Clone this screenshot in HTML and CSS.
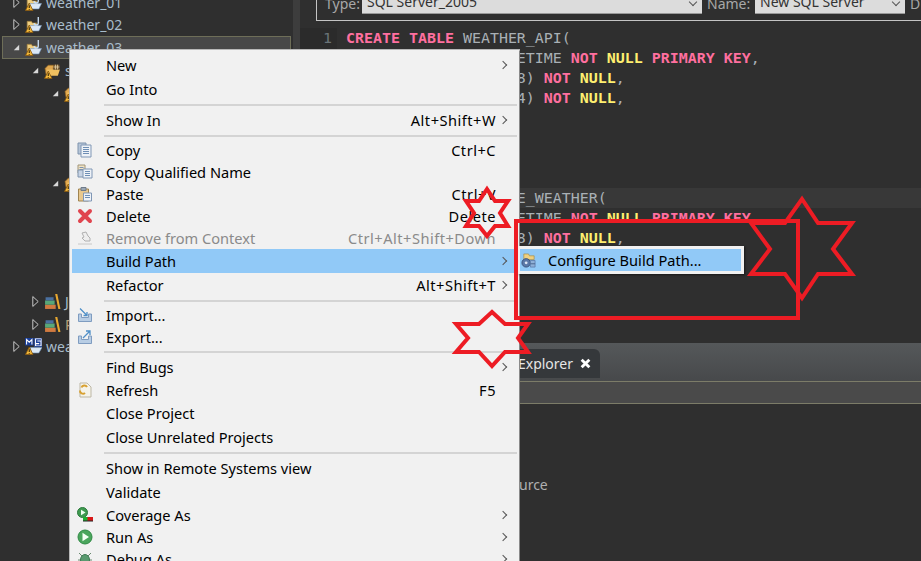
FILE: index.html
```html
<!DOCTYPE html>
<html lang="en">
<head>
<meta charset="utf-8">
<title>Eclipse context menu</title>
<link rel="stylesheet" href="styles.css">
</head>
<body>
<svg class="defs" width="0" height="0" aria-hidden="true">
  <symbol id="arrow-open" viewBox="0 0 10 10"><path d="M8 2V8H2Z" fill="#d8d8d8"/></symbol>
  <symbol id="arrow-closed" viewBox="0 0 10 14"><path d="M2 1.5L8 7L2 12.5Z" fill="#2b2b2b" stroke="#d8d8d8" stroke-width="1"/></symbol>
  <symbol id="warn" viewBox="0 0 16 16"><path d="M4 8.5L7.5 15.5H.5Z" fill="#f2b83a" stroke="#8a5a10" stroke-width=".8"/><path d="M4 10.5V13.2M4 14V14.8" stroke="#30200a" stroke-width="1"/></symbol>
  <symbol id="project" viewBox="0 0 16 16"><path d="M2 5H6L7 6.5H11V12H2Z" fill="#f0cf80" stroke="#9a7a3a" stroke-width=".7"/><path d="M4 9H15.5L13 14H5Z" fill="#dbe8f5" stroke="#7a9cc0" stroke-width=".6"/><path d="M12.5 1V6.5A2 2 0 0 1 8.5 6.5" fill="none" stroke="#c8dcf0" stroke-width="1.3"/><use href="#warn"/></symbol>
  <symbol id="srcfolder" viewBox="0 0 16 16"><path d="M1 6L4 3H9L8 12H2Z" fill="#e0a850" stroke="#9a6a20" stroke-width=".6"/><path d="M3 7H15L13 13H3Z" fill="#f0c060"/><path d="M9 2.5H14.5V7H9Z" fill="#7a5a30"/><path d="M10.8 2.5V7M12.7 2.5V7M9 4.7H14.5" stroke="#e8d8b0" stroke-width=".7"/><use href="#warn"/></symbol>
  <symbol id="library" viewBox="0 0 16 16"><path d="M1 11H11V15H1Z" fill="#d07a40"/><path d="M1 7H10V11H1Z" fill="#58a878"/><path d="M1.500 4H9V7H1.500Z" fill="#4a70a0"/><path d="M10.500 1H12.500L15.500 15H13.500Z" fill="#e8a830"/></symbol>
  <symbol id="mssql" viewBox="0 0 16 16"><path d="M0 0H8V7H0Z" fill="#1a3f9a"/><path d="M9 0H16V8H9Z" fill="#fff" stroke="#1a3f9a" stroke-width=".8"/><path d="M1.500 6V1.500L4 4L6.500 1.500V6" fill="none" stroke="#fff" stroke-width="1"/><path d="M15 1.700H11V4H14V6.500H10.500" fill="none" stroke="#1a3f9a" stroke-width="1.200"/><path d="M5 9H16L13 14H6Z" fill="#dbe8f5" stroke="#7a9cc0" stroke-width=".6"/><use href="#warn"/></symbol>
  <symbol id="copy" viewBox="0 0 16 16"><path d="M1 1H9L9 12H1Z" fill="#b7c6d8" stroke="#7f93ad"/><path d="M4 3H14V15H4Z" fill="#eef2f7" stroke="#8097b5"/><path d="M6 5.500H12M6 7.500H12M6 9.500H12M6 11.500H12" stroke="#6f8fb5"/></symbol>
  <symbol id="copyq" viewBox="0 0 16 16"><path d="M1 1H8V9H1Z" fill="#f2e4c4" stroke="#a09478"/><path d="M2.500 3.500H6.500M2.500 5.500H6.500" stroke="#7f93ad"/><path d="M1 6H7V13H1Z" fill="#c8d4e4" stroke="#7f93ad"/><path d="M6 5H15V14H6Z" fill="#eef2f7" stroke="#8097b5"/><path d="M8 7.500H13M8 9.500H13M8 11.500H13" stroke="#6f8fb5"/></symbol>
  <symbol id="paste" viewBox="0 0 16 16"><path d="M1.500 3H11.500V15H1.500Z" fill="#e8c88e" stroke="#a08450"/><path d="M4 1.500H9V4.500H4Z" fill="#9aa7b5" stroke="#6f7b8a"/><path d="M6.500 7H14.500V15H6.500Z" fill="#eef2f7" stroke="#8097b5"/><path d="M8 9.500H13M8 11.500H13" stroke="#6f8fb5"/></symbol>
  <symbol id="delete" viewBox="0 0 16 16"><path d="M3 3L13 13M13 3L3 13" stroke="#e0454f" stroke-width="4" stroke-linecap="round"/></symbol>
  <symbol id="remove" viewBox="0 0 16 16"><path d="M1 14H15" stroke="#c8c8c8"/><path d="M5 3L9 2L11 6L13 8V11H8L5 8L7 7Z" fill="#eee" stroke="#b0b0b0"/></symbol>
  <symbol id="import" viewBox="0 0 16 16"><path d="M1.500 7V14.500H14.500V7H11.500V10.500H4.500V7Z" fill="#b8cde4" stroke="#7f9cc0"/><path d="M3 1.500L10 8.500M10 5V8.500H6.500" fill="none" stroke="#4f8fc8" stroke-width="1.300"/></symbol>
  <symbol id="export" viewBox="0 0 16 16"><path d="M1.500 7V14.500H14.500V7H11.500V10.500H4.500V7Z" fill="#b8cde4" stroke="#7f9cc0"/><path d="M6 9L13 2M9 2H13V6" fill="none" stroke="#4f8fc8" stroke-width="1.300"/></symbol>
  <symbol id="refresh" viewBox="0 0 16 16"><path d="M3 1H10L14 5V15H3Z" fill="#f5f3ea" stroke="#bdb7a5"/><path d="M10 5A3 3 0 0 0 4.500 5.500M3 8.500A3 3 0 0 0 8 11" fill="none" stroke="#d8a030" stroke-width="2"/></symbol>
  <symbol id="coverage" viewBox="0 0 16 16"><circle cx="5.500" cy="5.500" r="5" fill="#3f9a50" stroke="#2c7a3c"/><path d="M4 2.800L8.500 5.500L4 8.200Z" fill="#f0fff0"/><path d="M6 10H11V14H6Z" fill="#1fb030"/><path d="M10.500 10H16V14H10.500Z" fill="#d81818"/><path d="M6 14H16" stroke="#222"/></symbol>
  <symbol id="run" viewBox="0 0 16 16"><circle cx="8" cy="8" r="7" fill="#4aa55c" stroke="#2f8a44"/><path d="M5.500 3.800L12 8L5.500 12.200Z" fill="#f4fff4"/></symbol>
  <symbol id="debug" viewBox="0 0 16 16"><path d="M2 2L6 6M14 2L10 6M1 9H15M3 15L6 12M13 15L10 12" stroke="#6a8a70"/><ellipse cx="8" cy="9" rx="4.500" ry="5.500" fill="#5a9a70" stroke="#3f7a55"/></symbol>
  <symbol id="buildpath" viewBox="0 0 16 16"><path d="M3 1H8L9 3H14V7H3Z" fill="#efd080" stroke="#a58a40" stroke-width=".7"/><circle cx="5.500" cy="10.500" r="4.500" fill="#5a78a8" stroke="#39507a"/><circle cx="5.500" cy="10.500" r="1.500" fill="#dfe8f5"/><path d="M10 8H15V15H10Z" fill="#8fb0d8" stroke="#5a78a8" stroke-width=".8"/><path d="M10 11.500H15" stroke="#4a648c"/></symbol>
</svg>

<div class="workbench">
  <aside class="explorer">
    <div class="tree">
      <div class="node"><svg class="tw"><use href="#arrow-closed"/></svg><svg class="ic"><use href="#project"/></svg><span>weather_01</span></div>
      <div class="node"><svg class="tw"><use href="#arrow-closed"/></svg><svg class="ic"><use href="#project"/></svg><span>weather_02</span></div>
      <div class="node selected"><svg class="tw"><use href="#arrow-open"/></svg><svg class="ic"><use href="#project"/></svg><span>weather_03</span></div>
      <div class="node lv1"><svg class="tw"><use href="#arrow-open"/></svg><svg class="ic"><use href="#srcfolder"/></svg><span>s</span></div>
      <div class="node lv2"><svg class="tw"><use href="#arrow-open"/></svg><svg class="ic"><use href="#srcfolder"/></svg></div>
      <div class="node lv2"></div>
      <div class="node lv2"></div>
      <div class="node lv2"></div>
      <div class="node lv2"><svg class="tw"><use href="#arrow-open"/></svg><svg class="ic"><use href="#srcfolder"/></svg></div>
      <div class="node lv2"></div>
      <div class="node lv2"></div>
      <div class="node lv2"></div>
      <div class="node lv2"></div>
      <div class="node lv1 after-gap"><svg class="tw"><use href="#arrow-closed"/></svg><svg class="ic"><use href="#library"/></svg><span>J</span></div>
      <div class="node lv1"><svg class="tw"><use href="#arrow-closed"/></svg><svg class="ic"><use href="#library"/></svg><span class="lib-name">R</span></div>
      <div class="node"><svg class="tw"><use href="#arrow-closed"/></svg><svg class="ic"><use href="#mssql"/></svg><span>wea</span></div>
    </div>
  </aside>
  <div class="scrollbar"></div>
  <main class="main">
    <div class="profile">
      <div class="profile-row">
        <span class="field-label type-label">Type:</span>
        <div class="select type-select"><span>SQL Server_2005</span><b class="chev"></b></div>
        <span class="field-label name-label">Name:</span>
        <div class="select name-select"><span>New SQL Server</span><b class="chev"></b></div>
        <span class="field-label">D</span>
      </div>
    </div>
    <div class="editor">
      <div class="code-line"><span class="num">1</span><code><i>CREATE TABLE</i> WEATHER_API(</code></div>
      <div class="code-line"><span class="num"></span><code>                   ETIME <i>NOT</i> <u>NULL</u> <i>PRIMARY KEY</i>,</code></div>
      <div class="code-line"><span class="num"></span><code>                   8) <i>NOT</i> <u>NULL</u>,</code></div>
      <div class="code-line"><span class="num"></span><code>                   4) <i>NOT</i> <u>NULL</u>,</code></div>
      <div class="code-line"><span class="num"></span></div>
      <div class="code-line"><span class="num"></span></div>
      <div class="code-line"><span class="num"></span></div>
      <div class="code-line"><span class="num"></span></div>
      <div class="code-line current"><span class="num"></span><code>                   E_WEATHER(</code></div>
      <div class="code-line"><span class="num"></span><code>                   ETIME <i>NOT</i> <u>NULL</u> <i>PRIMARY KEY</i>,</code></div>
      <div class="code-line"><span class="num"></span><code>                   8) <i>NOT</i> <u>NULL</u>,</code></div>
    </div>
    <div class="tabstrip"><div class="tab"><span>Explorer</span><svg class="close" viewBox="0 0 10 10"><path d="M1.500 1.500L8.500 8.500M8.500 1.500L1.500 8.500" stroke="#fff" stroke-width="2.600"/></svg></div></div>
    <div class="toolbar"></div>
    <div class="console"><span>urce</span></div>
  </main>
</div>

<nav class="menu">
  <div class="row"><span class="label">New</span><b class="more"></b></div>
  <div class="row"><span class="label">Go Into</span></div>
  <hr>
  <div class="row"><span class="label">Show In</span><span class="key">Alt+Shift+W</span><b class="more"></b></div>
  <hr>
  <div class="row icon"><svg class="mi"><use href="#copy"/></svg><span class="label">Copy</span><span class="key">Ctrl+C</span></div>
  <div class="row icon"><svg class="mi"><use href="#copyq"/></svg><span class="label">Copy Qualified Name</span></div>
  <div class="row icon"><svg class="mi"><use href="#paste"/></svg><span class="label">Paste</span><span class="key">Ctrl+V</span></div>
  <div class="row icon"><svg class="mi"><use href="#delete"/></svg><span class="label">Delete</span><span class="key">Delete</span></div>
  <div class="row icon disabled"><svg class="mi"><use href="#remove"/></svg><span class="label">Remove from Context</span><span class="key">Ctrl+Alt+Shift+Down</span></div>
  <div class="row active"><span class="label">Build Path</span><b class="more"></b></div>
  <div class="row"><span class="label">Refactor</span><span class="key">Alt+Shift+T</span><b class="more"></b></div>
  <hr>
  <div class="row icon"><svg class="mi"><use href="#import"/></svg><span class="label">Import...</span></div>
  <div class="row icon"><svg class="mi"><use href="#export"/></svg><span class="label">Export...</span></div>
  <hr>
  <div class="row"><span class="label">Find Bugs</span><b class="more"></b></div>
  <div class="row icon"><svg class="mi"><use href="#refresh"/></svg><span class="label">Refresh</span><span class="key">F5</span></div>
  <div class="row"><span class="label">Close Project</span></div>
  <div class="row"><span class="label">Close Unrelated Projects</span></div>
  <hr>
  <div class="row"><span class="label">Show in Remote Systems view</span></div>
  <div class="row"><span class="label">Validate</span></div>
  <div class="row icon"><svg class="mi"><use href="#coverage"/></svg><span class="label">Coverage As</span><b class="more"></b></div>
  <div class="row icon"><svg class="mi"><use href="#run"/></svg><span class="label">Run As</span><b class="more"></b></div>
  <div class="row icon"><svg class="mi"><use href="#debug"/></svg><span class="label">Debug As</span><b class="more"></b></div>
</nav>

<div class="submenu"><div class="subrow"><svg class="si"><use href="#buildpath"/></svg><span>Configure Build Path...</span></div></div>

<svg class="marks" viewBox="0 0 921 561" aria-hidden="true">
  <rect x="516" y="221" width="282" height="97"/>
  <polygon points="487,189 495,201 508,201 500,213 508,226 495,226 487,236 479,226 466,226 474,213 466,201 479,201"/>
  <polygon points="802,199 818,223 852,223 833,249 852,274 818,274 802,298 785,274 751,274 770,249 751,223 785,223"/>
  <polygon points="492,312 505,324 528,324 518,338 528,352 505,352 492,366 479,352 456,352 468,338 456,324 479,324"/>
</svg>
</body>
</html>
```

FILE: styles.css
```css
* { box-sizing: border-box; }
html, body { margin: 0; height: 100%; overflow: hidden; }
body { position: relative; width: 921px; height: 561px; background: #2f2f2f; font-family: "Noto Sans", "Open Sans", sans-serif; font-size: 14px; }
.defs { position: absolute; }

.workbench { display: flex; height: 561px; overflow: hidden; }
.explorer { width: 293px; flex: none; overflow: hidden; background: #2f2f2f; }
.scrollbar { width: 7px; flex: none; background: #3d3d3d; }
.main { flex: 1; min-width: 0; display: flex; flex-direction: column; overflow: hidden; }

.tree { margin-top: -9px; padding: 0 2px; }
.node { height: 22.6px; display: flex; align-items: center; padding-left: 9px; color: #a8bccb; font-size: 14px; white-space: nowrap; border: 1px solid transparent; }
.node span { margin-left: 4px; }
.node .lib-name { color: #b8a078; }
.node.selected { background: #484848; border-color: #6e6e58; height: 23px; }
.node.lv1 { padding-left: 28px; }
.node.lv2 { padding-left: 48px; }
.node.after-gap { margin-top: 5px; }
.tw { width: 9px; height: 13px; flex: none; }
.ic { width: 17px; height: 17px; flex: none; margin-left: 4px; }

.profile { margin-left: 16px; height: 21px; border: 1px solid #c4c4c4; border-width: 0 0 1px 1px; padding-left: 8px; overflow: hidden; }
.profile-row { display: flex; align-items: center; gap: 5px; margin-top: -8px; color: #a8a8a8; white-space: nowrap; }
.type-label { width: 32px; flex: none; }
.name-label { width: 43px; flex: none; }
.select { height: 22px; display: flex; align-items: center; justify-content: space-between; background: #dcdcdc; color: #333; padding: 0 4px 2px 5px; border-bottom: 1px solid #999; flex: none; }
.type-select { width: 340px; }
.name-select { width: 150px; }
.chev { width: 6px; height: 6px; border: solid #555; border-width: 0 1px 1px 0; transform: rotate(45deg); margin-right: 2px; }

.editor { height: 322px; padding-top: 7px; overflow: hidden; background: #2f2f2f; }
.code-line { height: 20px; line-height: 20px; display: flex; font-family: "DejaVu Sans Mono", monospace; font-size: 14.950px; color: #a9b0b5; white-space: pre; }
.code-line.current { background: #383838; }
.num { width: 37px; flex: none; text-align: right; padding-right: 5px; color: #6a7478; background: #2b2b2b; }
.code-line code { font: inherit; margin-left: 9px; }
.code-line i { font-style: normal; font-weight: 700; color: #ff6f9f; }
.code-line u { text-decoration: none; font-weight: 700; color: #ffef70; }

.tabstrip { height: 38px; display: flex; align-items: flex-end; padding: 0 0 3px 100px; background: linear-gradient(#55585a, #47494b); flex: none; }
.tab { width: 200px; height: 29px; display: flex; align-items: center; justify-content: flex-end; gap: 7px; padding-right: 9px; background: #35383b; border-radius: 0 6px 0 0; color: #e6e6e6; font-size: 14px; }
.close { width: 11px; height: 11px; }
.toolbar { height: 23px; background: #4a4a4a; border: solid #7c7c68; border-width: 1px 0; flex: none; }
.console { flex: 1; background: #2f2f2f; color: #b0b0b0; padding: 71px 0 0 219px; }

.menu { position: absolute; left: 70px; top: 50px; width: 449px; height: 520px; padding: 3px 2px 0; background: #f1f1f1; box-shadow: 1px 1px 0 #8a8a8a, 0 0 0 1px #b8b8b8; color: #000; font-size: 14.600px; overflow: hidden; }
.menu hr { height: 7px; margin: 0 0 0 32px; border: 0; background: linear-gradient(#d4d4d4, #d4d4d4) center / 100% 2px no-repeat; }
.row { height: 24px; display: flex; align-items: center; padding-left: 34px; position: relative; white-space: nowrap; }
.row.icon { height: 22px; }
.row.active { background: #91c9f7; }
.row.disabled { color: #8a8a8a; }
.label { flex: 1; }
.key { margin-right: 21px; letter-spacing: .5px; }
.more { position: absolute; left: 428px; top: 50%; width: 6px; height: 6px; margin-top: -3px; border: solid #555; border-width: 1px 1px 0 0; transform: rotate(45deg); }
.mi { position: absolute; left: 5px; top: 3px; width: 16px; height: 16px; }

.submenu { position: absolute; left: 518px; top: 246px; width: 226px; height: 28px; padding: 3px 3px 3px 2px; background: #f1f1f1; box-shadow: 1px 1px 2px rgba(0,0,0,.5); }
.subrow { height: 22px; display: flex; align-items: center; background: #91c9f7; color: #000; font-size: 14.600px; padding-left: 1px; }
.si { width: 15px; height: 15px; flex: none; margin-right: 12px; }

.marks { position: absolute; left: 0; top: 0; width: 921px; height: 561px; pointer-events: none; }
.marks rect, .marks polygon { fill: none; stroke: #ed1c24; stroke-width: 4; }
```
